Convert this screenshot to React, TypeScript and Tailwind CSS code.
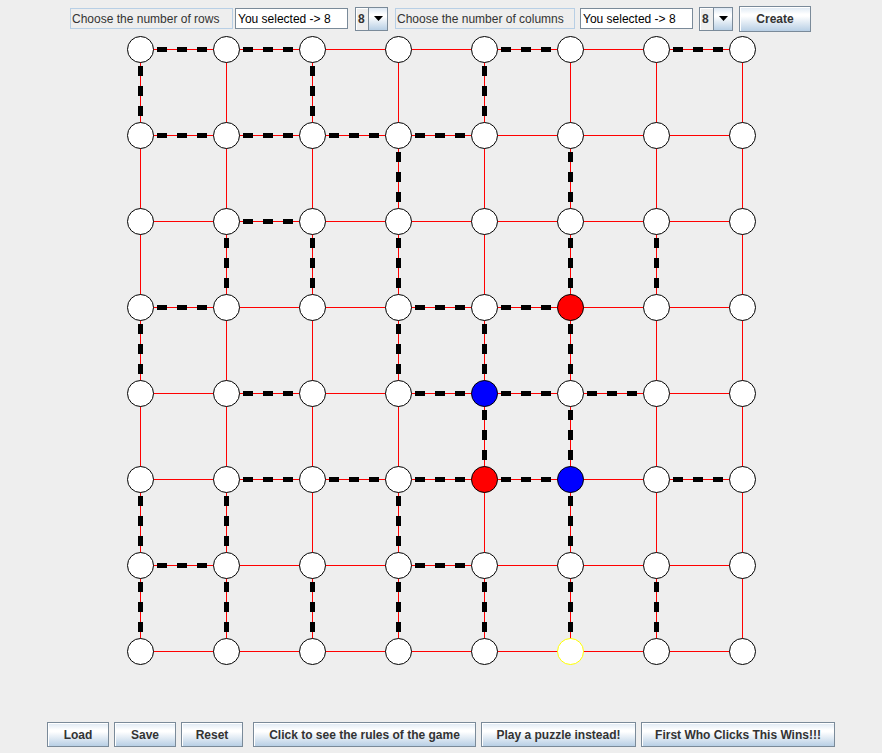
import React from "react";

const COLS = [140, 226, 312, 398, 484, 570, 656, 742];
const ROWS = [49, 135, 221, 307, 393, 479, 565, 651];

// 'D' = thick dashed edge on top of the red line
const H_EDGES = [
  "DD--D-D",
  "DDDD---",
  "-D-----",
  "D--DD--",
  "-D-DDD-",
  "-DDDD-D",
  "D--D---",
  "-------",
];

const V_EDGES = [
  "D--D-DD",
  "--D--DD",
  "D-D---D",
  "-DDD-DD",
  "D--DD-D",
  "-DDDDDD",
  "--D---D",
  "-------",
];

const SPECIAL: Record<string, { fill: string; stroke: string }> = {
  "3-5": { fill: "#ff0000", stroke: "#000000" },
  "5-4": { fill: "#ff0000", stroke: "#000000" },
  "4-4": { fill: "#0000ff", stroke: "#000000" },
  "5-5": { fill: "#0000ff", stroke: "#000000" },
  "7-5": { fill: "#ffffff", stroke: "#ffff00" },
};

const DASH_OFFSETS = [17, 37, 57];

const btn =
  "h-[25px] flex items-center justify-center border border-[#7a8a99] bg-[linear-gradient(to_bottom,#dde8f3_0%,#ffffff_30%,#ffffff_38%,#b8cfe5_100%)] shadow-[inset_1px_1px_0_#ffffff] text-[12px] font-bold text-[#333333]";

function Combo({ w }: { w: string }) {
  return (
    <div className={`${w} h-[24px] flex border border-[#7a8a99] bg-[#eeeeee]`}>
      <div className="flex-1 flex items-center pl-[2px] text-[12px] font-bold text-[#333333] shadow-[inset_1px_1px_0_#ffffff] border-r border-[#7a8a99]">
        8
      </div>
      <div className="w-[18px] flex items-center justify-center bg-[linear-gradient(to_bottom,#dde8f3_0%,#ffffff_30%,#ffffff_38%,#b8cfe5_100%)]">
        <svg width="9" height="5" viewBox="0 0 9 5">
          <polygon points="0,0 9,0 4.5,5" fill="#000000" />
        </svg>
      </div>
    </div>
  );
}

function Board() {
  const x0 = COLS[0];
  const x1 = COLS[COLS.length - 1];
  const y0 = ROWS[0];
  const y1 = ROWS[ROWS.length - 1];
  return (
    <svg width="882" height="680" viewBox="0 36 882 680" className="block" shapeRendering="crispEdges">
      {/* thin red grid */}
      {ROWS.map((y) => (
        <line key={`hl${y}`} x1={x0 + 0.5} y1={y + 0.5} x2={x1 + 0.5} y2={y + 0.5} stroke="#ff0000" strokeWidth="1" />
      ))}
      {COLS.map((x) => (
        <line key={`vl${x}`} x1={x + 0.5} y1={y0 + 0.5} x2={x + 0.5} y2={y1 + 0.5} stroke="#ff0000" strokeWidth="1" />
      ))}

      {/* thick dashes */}
      {H_EDGES.map((row, r) =>
        row.split("").map((e, c) =>
          e === "D"
            ? DASH_OFFSETS.map((o) => (
                <rect key={`hd${r}-${c}-${o}`} x={COLS[c] + o} y={ROWS[r] - 2} width="10" height="5" fill="#000000" />
              ))
            : null
        )
      )}
      {V_EDGES.map((col, c) =>
        col.split("").map((e, r) =>
          e === "D"
            ? DASH_OFFSETS.map((o) => (
                <rect key={`vd${c}-${r}-${o}`} x={COLS[c] - 2} y={ROWS[r] + o} width="5" height="10" fill="#000000" />
              ))
            : null
        )
      )}

      {/* nodes */}
      <g shapeRendering="auto">
        {ROWS.map((y, r) =>
          COLS.map((x, c) => {
            const s = SPECIAL[`${r}-${c}`] ?? { fill: "#ffffff", stroke: "#000000" };
            return (
              <circle key={`n${r}-${c}`} cx={x + 0.5} cy={y + 0.5} r="13" fill={s.fill} stroke={s.stroke} strokeWidth="1" />
            );
          })
        )}
      </g>
    </svg>
  );
}

export default function App() {
  return (
    <div
      className="w-[882px] h-[753px] bg-[#eeeeee] flex flex-col overflow-hidden"
      style={{ fontFamily: '"Liberation Sans", Arial, sans-serif' }}
    >
      {/* Top controls */}
      <div className="h-[36px] flex items-center pt-[1px] pl-[70px]">
        <div className="w-[163px] h-[21px] flex items-center pl-[1px] border border-[#b8cfe5] text-[12px] text-[#333333]">
          Choose the number of rows
        </div>
        <div className="ml-[2px] w-[113px] h-[21px] flex items-center pl-[2px] bg-white border border-[#7a8a99] text-[12px] text-[#000000]">
          You selected -&gt; 8
        </div>
        <div className="ml-[7px]">
          <Combo w="w-[33px]" />
        </div>
        <div className="ml-[7px] w-[180px] h-[21px] flex items-center pl-[1px] border border-[#b8cfe5] text-[12px] text-[#333333]">
          Choose the number of columns
        </div>
        <div className="ml-[5px] w-[113px] h-[21px] flex items-center pl-[2px] bg-white border border-[#7a8a99] text-[12px] text-[#000000]">
          You selected -&gt; 8
        </div>
        <div className="ml-[6px]">
          <Combo w="w-[34px]" />
        </div>
        <button className={`${btn} ml-[6px] w-[72px] h-[26px]`}>Create</button>
      </div>

      {/* Board */}
      <Board />

      {/* Bottom buttons */}
      <div className="h-[37px] flex items-start pt-[6px] pl-[47px]">
        <button className={`${btn} w-[62px] pt-[1px]`}>Load</button>
        <button className={`${btn} ml-[5px] w-[62px] pt-[1px]`}>Save</button>
        <button className={`${btn} ml-[5px] w-[62px] pt-[1px]`}>Reset</button>
        <button className={`${btn} ml-[10px] w-[223px] pt-[1px]`}>Click to see the rules of the game</button>
        <button className={`${btn} ml-[5px] w-[155px] pt-[1px]`}>Play a puzzle instead!</button>
        <button className={`${btn} ml-[5px] w-[194px] pt-[1px]`}>First Who Clicks This Wins!!!</button>
      </div>
    </div>
  );
}
